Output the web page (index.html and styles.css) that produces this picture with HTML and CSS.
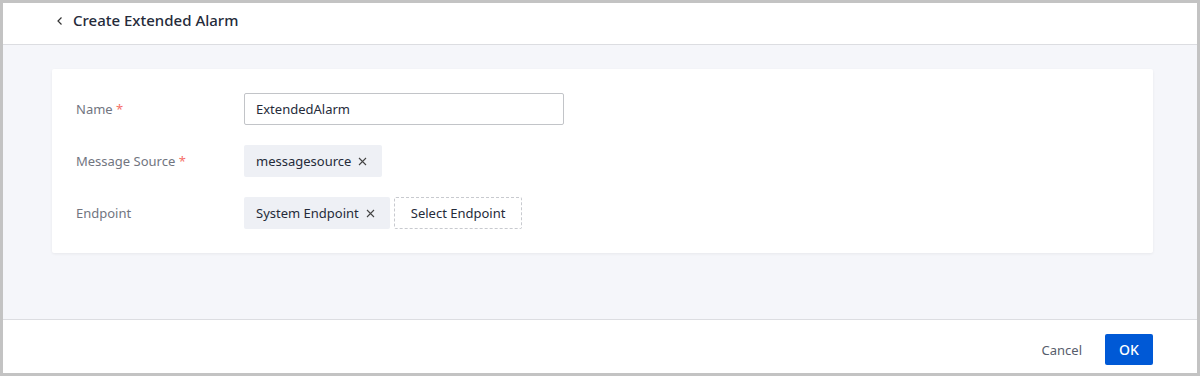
FILE: index.html
```html
<!DOCTYPE html>
<html lang="en">
<head>
<meta charset="UTF-8">
<title>Create Extended Alarm</title>
<link rel="stylesheet" href="styles.css">
</head>
<body>
  <div class="frame">
    <div class="page-header">
      <span class="back">
        <svg width="8" height="10" viewBox="0 0 8 10"><path d="M5.5 1.5 L2 5 L5.5 8.5" fill="none" stroke="#333" stroke-width="1.2"/></svg>
      </span>
      <h1>Create Extended Alarm</h1>
    </div>

    <div class="page-body">
      <div class="card">
        <div class="form-row">
          <label>Name <span class="req">*</span></label>
          <input class="text-input" type="text" value="ExtendedAlarm">
        </div>
        <div class="form-row">
          <label>Message Source <span class="req">*</span></label>
          <div class="tags">
            <span class="tag">messagesource
              <svg class="close" width="9" height="9" viewBox="0 0 9 9"><path d="M1 1 L8 8 M8 1 L1 8" stroke="#444" stroke-width="1.1"/></svg>
            </span>
          </div>
        </div>
        <div class="form-row">
          <label>Endpoint</label>
          <div class="tags">
            <span class="tag">System Endpoint
              <svg class="close" width="9" height="9" viewBox="0 0 9 9"><path d="M1 1 L8 8 M8 1 L1 8" stroke="#444" stroke-width="1.1"/></svg>
            </span>
            <span class="select-btn">Select Endpoint</span>
          </div>
        </div>
      </div>
    </div>

    <div class="page-footer">
      <button class="btn-text">Cancel</button>
      <button class="btn-primary">OK</button>
    </div>
  </div>
</body>
</html>
```

FILE: styles.css
```css
html, body {
  margin: 0;
  height: 100%;
}
body {
  font-family: 'Noto Sans', 'Open Sans', Arial, sans-serif;
  background: #c3c3c3;
  padding: 3px;
  box-sizing: border-box;
  color: #333;
}
.frame {
  height: 100%;
  background: #f5f6fa;
  display: flex;
  flex-direction: column;
}
.page-header {
  height: 41px;
  background: #fff;
  border-bottom: 1px solid #dcdde1;
  display: flex;
  align-items: center;
  padding-left: 53px;
}
.back {
  display: flex;
  align-items: center;
  margin-right: 9px;
  position: relative;
  top: -3px;
}
.page-header h1 {
  font-size: 15px;
  font-weight: 500;
  color: #252b3a;
  margin: 0;
  position: relative;
  top: -4px;
}
.page-body {
  flex: 1;
  padding: 24px 44px 0 49px;
}
.card {
  background: #fff;
  padding: 24px;
  border-radius: 2px;
  box-shadow: 0 1px 3px rgba(0, 0, 0, 0.06);
  display: flex;
  flex-direction: column;
  gap: 20px;
}
.form-row {
  display: flex;
  align-items: center;
  height: 32px;
}
.form-row label {
  width: 168px;
  font-size: 13px;
  color: #71757f;
}
.req {
  color: #f66f6a;
}
.text-input {
  width: 320px;
  height: 32px;
  box-sizing: border-box;
  border: 1px solid #c2c4c8;
  border-radius: 2px;
  padding: 0 11px;
  font-family: inherit;
  font-size: 13px;
  color: #252b3a;
  outline: none;
}
.tags {
  display: flex;
  gap: 4px;
}
.tag {
  height: 32px;
  box-sizing: border-box;
  background: #eef0f5;
  border-radius: 2px;
  padding: 0 15px 0 12px;
  display: flex;
  align-items: center;
  font-size: 13px;
  color: #252b3a;
}
.close {
  margin-left: 7px;
}
.select-btn {
  height: 32px;
  box-sizing: border-box;
  border: 1px dashed #c8cacf;
  border-radius: 2px;
  padding: 0 16px;
  display: flex;
  align-items: center;
  font-size: 13px;
  color: #252b3a;
}
.page-footer {
  height: 54px;
  box-sizing: border-box;
  background: #fff;
  border-top: 1px solid #dcdde1;
  display: flex;
  align-items: flex-start;
  justify-content: flex-end;
  padding: 14px 44px 0 0;
  gap: 11px;
}
.btn-text {
  background: none;
  border: none;
  font-family: inherit;
  font-size: 13px;
  color: #575d6c;
  padding: 0 12px;
  height: 32px;
}
.btn-primary {
  background: #0059d6;
  color: #fff;
  border: none;
  border-radius: 2px;
  font-family: inherit;
  font-size: 14px;
  font-weight: 500;
  width: 48px;
  height: 31px;
  padding: 0;
}
```
